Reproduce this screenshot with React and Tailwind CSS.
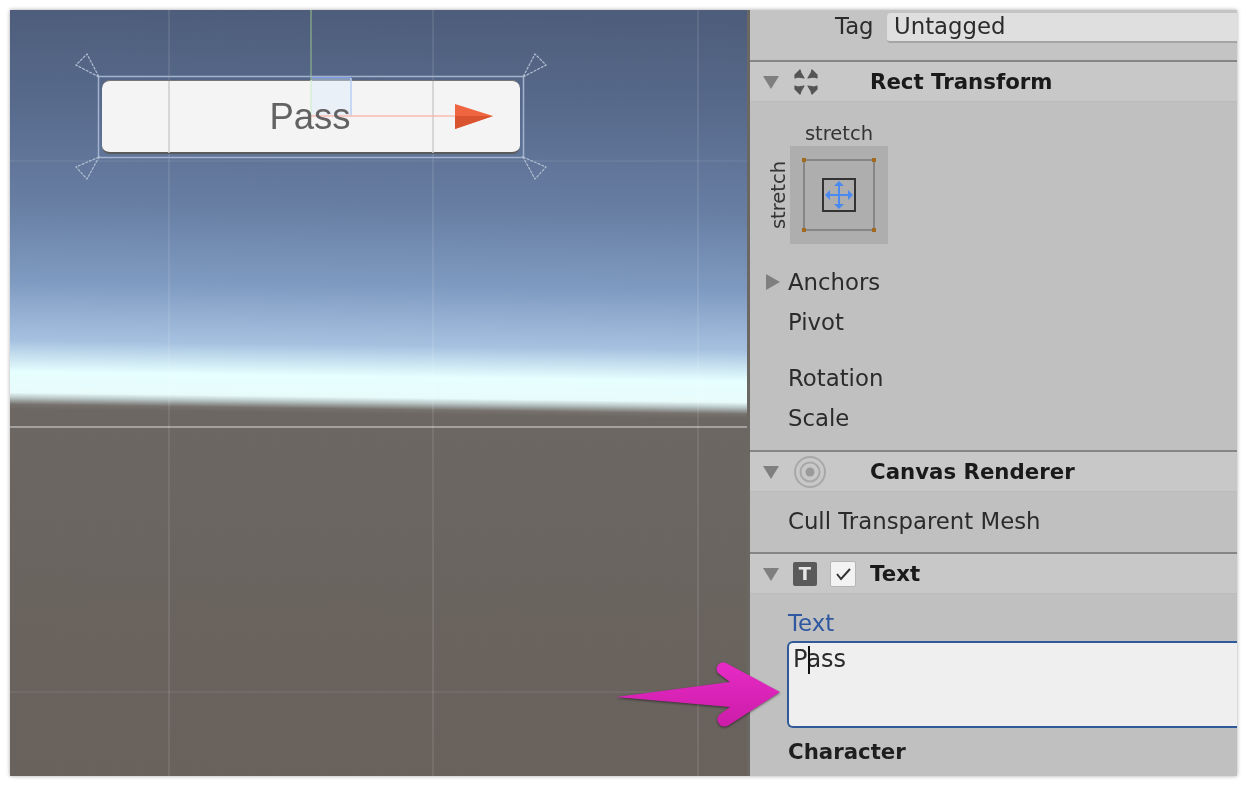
const FONT = "font-['DejaVu_Sans',sans-serif]";

const fineLines = [];
for (let x = 37; x < 747; x += 26.4) fineLines.push(x);

const Caret = () => (
  <svg width="18" height="16" viewBox="0 0 18 16" className="shrink-0">
    <path d="M1 2h16L9 15z" fill="#7f7f7f" />
  </svg>
);

const RectIcon = () => (
  <svg width="26" height="26" viewBox="0 0 26 26" fill="#555" stroke="#555" strokeWidth="1.2" strokeLinejoin="round">
    <path d="M2 6l5-5 1 3 3 5-6-1-3 1z" />
    <path d="M24 6l-5-5-1 3-3 5 6-1 3 1z" />
    <path d="M2 20l5 5 1-3 3-5-6 1-3-1z" />
    <path d="M24 20l-5 5-1-3-3-5 6 1 3-1z" />
  </svg>
);

const TargetIcon = () => (
  <svg width="34" height="34" viewBox="0 0 34 34" fill="none" stroke="#a8a8a8">
    <circle cx="17" cy="17" r="15" strokeWidth="2" />
    <circle cx="17" cy="17" r="9.5" strokeWidth="2" />
    <circle cx="17" cy="17" r="4.5" fill="#9a9a9a" stroke="none" />
  </svg>
);

const Header = ({ icon, title }) => (
  <div className="h-[42px] shrink-0 border-b border-t-2 border-b-[#bcbcbc] border-t-[#858585] bg-[#c8c8c8]">
    <div className="flex h-full items-center pl-[12px]">
      <Caret />
      <div className="ml-[13px] flex w-[77px] items-center gap-[13px]">{icon}</div>
      <span className="text-[21.3px] font-bold text-[#1a1a1a]">{title}</span>
    </div>
  </div>
);

const Row = ({ children, className = "" }) => (
  <div className={`flex h-[40px] items-center pl-[38px] text-[22.8px] text-[#2b2b2b] ${className}`}>{children}</div>
);

const AnchorWidget = () => (
  <div className="relative ml-[40px] mt-[44px] h-[98px] w-[98px] bg-[#aeaeae]">
    <span className="absolute -top-[23px] left-0 w-full text-center text-[19.5px] leading-[22px] text-[#333]">stretch</span>
    <span className="absolute -left-[61px] top-[38px] w-[100px] -rotate-90 text-center text-[19.5px] leading-[22px] text-[#333]">stretch</span>
    <svg width="98" height="98" viewBox="0 0 98 98" fill="none">
      <rect x="14" y="14" width="70" height="70" stroke="#868686" strokeWidth="2" />
      <g fill="#a3691f">
        <rect x="12" y="12" width="4" height="4" />
        <rect x="82" y="12" width="4" height="4" />
        <rect x="12" y="82" width="4" height="4" />
        <rect x="82" y="82" width="4" height="4" />
      </g>
      <rect x="33" y="33" width="32" height="32" stroke="#333" strokeWidth="2" />
      <path d="M49 38v22M38 49h22" stroke="#4a8af0" strokeWidth="2" />
      <path d="M49 35l5 5H44zM49 63l5-5H44zM35 49l5-5v10zM63 49l-5-5v10z" fill="#4a8af0" />
    </svg>
  </div>
);

const Scene = () => (
  <div className="relative w-[737px] shrink-0 overflow-hidden">
    <svg className="absolute inset-0" width="737" height="766" viewBox="10 10 737 766" fill="none">
      <defs>
        <linearGradient id="sky" gradientUnits="userSpaceOnUse" x1="10" y1="10" x2="-0.7" y2="800">
          <stop offset="0" stopColor="#4e5d7b" />
          <stop offset=".114" stopColor="#576a8c" />
          <stop offset=".24" stopColor="#677da2" />
          <stop offset=".342" stopColor="#7f9ac0" />
          <stop offset=".418" stopColor="#a6c1e0" />
          <stop offset=".458" stopColor="#e6ffff" />
          <stop offset=".484" stopColor="#e8fbfb" />
          <stop offset=".491" stopColor="#b5c2c2" />
          <stop offset=".499" stopColor="#76716c" />
          <stop offset=".505" stopColor="#6c6762" />
          <stop offset=".97" stopColor="#68615c" />
        </linearGradient>
      </defs>
      <rect x="10" y="10" width="737" height="766" fill="url(#sky)" />
      {fineLines.map((x) => (
        <path key={x} d={`M${x} 10v766`} stroke="#fff" strokeOpacity=".012" />
      ))}
      <path d="M169 10v766M433 10v766M698 10v766" stroke="#fff" strokeOpacity=".12" strokeWidth="1.5" />
      <path d="M10 161h737M10 692h737" stroke="#fff" strokeOpacity=".08" strokeWidth="1.5" />
      <path d="M10 427h737" stroke="#fff" strokeOpacity=".38" strokeWidth="2" />
    </svg>

    <div className="absolute left-[92px] top-[70px] h-[74px] w-[418px] rounded-[8px] border-b-2 border-t border-b-[#5a5a5a] border-t-[#777] bg-[#f4f4f4]" />

    <svg className="absolute inset-0" width="737" height="766" viewBox="10 10 737 766" fill="none">
      <path d="M169 81v72M433 81v72" stroke="#cdcdcd" strokeWidth="1.5" />
      <rect x="311" y="78" width="40" height="38" fill="#d9ecff" fillOpacity=".4" />
      <path d="M311 77h40" stroke="#6f95ee" strokeWidth="2" />
      <path d="M351 78v38" stroke="#b9cff5" strokeWidth="1.5" />
      <path d="M311 10v70" stroke="#8fb38a" strokeOpacity=".8" strokeWidth="1.5" />
      <path d="M311 80v36" stroke="#d6efd6" strokeWidth="1.5" />
      <path d="M311 116h144" stroke="#f8b5a8" strokeOpacity=".9" strokeWidth="1.5" />
      <path d="M455 104l38 12-38 13z" fill="#ee6540" />
      <path d="M455 129l38-13H455z" fill="#d9532f" />
      <rect x="98.5" y="76.5" width="425" height="81" stroke="#a3b3cd" strokeWidth="1.5" />
      <g stroke="#b0bdd2" strokeWidth="1.2" strokeDasharray="3 1">
        <path d="M99 77L76 65l11-11z" />
        <path d="M523 77l23-12-11-11z" />
        <path d="M99 157l-23 10 11 12z" />
        <path d="M523 157l23 10-11 12z" />
      </g>
    </svg>

    <div className="absolute left-[92px] top-[70px] flex h-[74px] w-[418px] items-center justify-center font-['Liberation_Sans',sans-serif] text-[36.5px] text-[#626262]">
      <span className="-ml-[2px]">Pass</span>
    </div>
  </div>
);

const Inspector = () => (
  <div className="flex min-w-0 flex-1 flex-col overflow-hidden bg-[#c0c0c0]">
    <div className="flex h-[50px] shrink-0 items-start bg-[#c4c4c4] pl-[85px] pt-[3px]">
      <span className="w-[52px] text-[22.8px] leading-[26px] text-[#2b2b2b]">Tag</span>
      <div className="h-[30px] flex-1 rounded-l-[4px] border-b-2 border-[#a5a5a5] bg-[#dfdfdf] pl-[7px] text-[22.8px] leading-[26px] text-[#2b2b2b]">Untagged</div>
    </div>

    <Header icon={<RectIcon />} title="Rect Transform" />
    <div className="h-[348px] shrink-0">
      <AnchorWidget />
      <Row className="mt-[18px]">
        <svg width="16" height="18" viewBox="0 0 16 18" className="-ml-[23px] mr-[7px]"><path d="M1 1l14 8-14 8z" fill="#7f7f7f" /></svg>
        Anchors
      </Row>
      <Row>Pivot</Row>
      <Row className="mt-[16px]">Rotation</Row>
      <Row>Scale</Row>
    </div>

    <Header icon={<TargetIcon />} title="Canvas Renderer" />
    <div className="h-[60px] shrink-0 pt-[9px]">
      <Row>Cull Transparent Mesh</Row>
    </div>

    <Header
      title="Text"
      icon={
        <>
          <span className="flex h-[24px] w-[24px] shrink-0 items-center justify-center rounded-[2px] bg-[#5a5a5a] text-[18px] font-bold leading-none text-[#e8e8e8]">T</span>
          <span className="flex h-[26px] w-[26px] shrink-0 items-center justify-center rounded-[2px] border border-[#b5b5b5] bg-[#f3f3f3]">
            <svg width="18" height="16" viewBox="0 0 18 16" fill="none"><path d="M3 8l4 5 9-10" stroke="#333" strokeWidth="2" /></svg>
          </span>
        </>
      }
    />
    <div className="flex-1">
      <div className="mt-[11px] flex h-[36px] items-center pl-[38px] text-[22.8px] text-[#2f58a0]">Text</div>
      <div className="relative ml-[37px] h-[87px] rounded-l-[6px] border-2 border-r-0 border-[#2f5a97] bg-[#efefef] pl-[4px] pt-[1px] text-[24px] leading-[30px] text-[#2b2b2b]">
        Pass
        <span className="absolute left-[19px] top-[3px] h-[28px] w-[2px] bg-[#111]" />
      </div>
      <div className="mt-[4px] flex h-[40px] items-center pl-[38px] text-[21.3px] font-bold text-[#1f1f1f]">Character</div>
    </div>
  </div>
);

const App = () => (
  <div className={`relative h-[786px] w-[1246px] overflow-hidden bg-white pb-[10px] pl-[10px] pr-[9px] pt-[10px] ${FONT}`}>
    <div className="flex h-full w-full shadow-[0_0_4px_rgba(0,0,0,0.35)] blur-[0.6px]">
      <Scene />
      <div className="w-[3px] shrink-0 bg-[#6b6864]" />
      <Inspector />
    </div>
    <svg className="absolute left-[610px] top-[655px] drop-shadow-[0_1px_1px_rgba(0,0,0,0.5)]" width="175" height="78" viewBox="610 655 175 78">
      <defs>
        <linearGradient id="pink" x1="0" y1="0" x2="0" y2="1">
          <stop offset="0" stopColor="#e62bc6" />
          <stop offset="1" stopColor="#cc1ca8" />
        </linearGradient>
      </defs>
      <path d="M616 697L730 682 718 673Q715 669 718 665 721 661 726 663L780 692 729 725Q724 728 720 725 715 720 719 715L730 707z" fill="url(#pink)" />
    </svg>
  </div>
);

export default App;
